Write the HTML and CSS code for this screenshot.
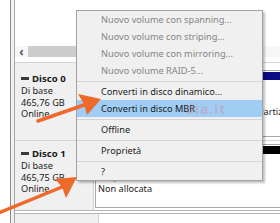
FILE: index.html
```html
<!DOCTYPE html>
<html lang="it">
<head>
<meta charset="utf-8">
<link rel="stylesheet" href="styles.css">
</head>
<body>
<div class="screen">
  <div class="gutter"></div>
  <div class="edge"></div>
  <div class="main">
    <div class="top-area"></div>
    <div class="hscroll">
      <span class="scroll-arrow">&#8249;</span>
      <div class="thumb"></div>
    </div>
    <div class="disk-row d0">
      <div class="disk-label">
        <div class="disk-title"><span class="disk-icon"></span>Disco 0</div>
        <div>Di base</div>
        <div>465,76 GB</div>
        <div>Online</div>
      </div>
      <div class="part-area">
        <div class="part">
          <div class="part-head navy"></div>
          <div class="part-body">
            <div>465,76 GB NTFS</div>
            <div class="status">Integro (Avvio, File di paging, Dump di arresto, Partizione primaria)</div>
          </div>
        </div>
      </div>
    </div>
    <div class="disk-row d1">
      <div class="disk-label">
        <div class="disk-title"><span class="disk-icon"></span>Disco 1</div>
        <div>Di base</div>
        <div>465,75 GB</div>
        <div>Online</div>
      </div>
      <div class="part-area">
        <div class="part">
          <div class="part-head black"></div>
          <div class="part-body unalloc">
            <div>465,75 GB</div>
            <div>Non allocata</div>
          </div>
        </div>
      </div>
    </div>
    <div class="disk-row cd">
      <div class="disk-label">
        <div class="disk-title"><span class="cd-icon"></span>CD-ROM 0</div>
      </div>
    </div>
  </div>

  <div class="menu">
    <div class="item dis">Nuovo volume con spanning...</div>
    <div class="item dis">Nuovo volume con striping...</div>
    <div class="item dis">Nuovo volume con mirroring...</div>
    <div class="item dis">Nuovo volume RAID-5...</div>
    <div class="sep"></div>
    <div class="item">Converti in disco dinamico...</div>
    <div class="item hl">Converti in disco MBR</div>
    <div class="sep"></div>
    <div class="item">Offline</div>
    <div class="sep"></div>
    <div class="item">Proprietà</div>
    <div class="sep"></div>
    <div class="item">?</div>
    <span class="wm">dia.it</span>
  </div>

  <svg class="arrows" width="280" height="223" viewBox="0 0 280 223">
    <line x1="38" y1="121" x2="84" y2="105" stroke="#ee6a2a" stroke-width="3.5" stroke-linecap="round"/>
    <path d="M101 99 L78 94 L84 104 L87 115 Z" fill="#ee6a2a"/>
    <line x1="-4" y1="214" x2="62" y2="187" stroke="#ee6a2a" stroke-width="3.5" stroke-linecap="round"/>
    <path d="M77 177 L55 179 L62 187 L66 198 Z" fill="#ee6a2a"/>
  </svg>
</div>
</body>
</html>
```

FILE: styles.css
```css
html, body {
  margin: 0;
  padding: 0;
  background: #ffffff;
}
body {
  width: 280px;
  height: 223px;
  overflow: hidden;
  font-family: "Noto Sans", "Open Sans", sans-serif;
  font-size: 9.2px;
  color: #1b1b1b;
}
.screen {
  position: relative;
  display: flex;
  width: 280px;
  height: 223px;
  overflow: hidden;
}
.gutter {
  width: 10px;
  flex: none;
  background: #ffffff;
}
.edge {
  width: 3px;
  flex: none;
  border-left: 1px solid #8c8c8c;
  border-right: 1px solid #a8a8a8;
  background: #f2f2f2;
}
.main {
  flex: 1;
  min-width: 0;
  display: flex;
  flex-direction: column;
  background: #ffffff;
}
.top-area {
  height: 46px;
  flex: none;
}
.hscroll {
  height: 11px;
  flex: none;
  display: flex;
  align-items: center;
  background: #f7f7f7;
}
.scroll-arrow {
  width: 13px;
  text-align: center;
  font-size: 12px;
  font-weight: bold;
  line-height: 11px;
  color: #555;
}
.thumb {
  width: 120px;
  height: 11px;
  background: #cdcdcd;
}
.disk-row {
  display: flex;
  flex: none;
  background: #ffffff;
}
.d0 {
  margin-top: 5px;
  height: 77px;
  border-top: 1px solid #d4d4d4;
}
.d1 {
  height: 69px;
  border-top: 1px solid #d4d4d4;
  border-bottom: 1px solid #b4b4b4;
}
.cd {
  margin-top: 2px;
  border-top: 1px solid #b4b4b4;
  height: 20px;
}
.disk-label {
  width: 72px;
  flex: none;
  padding: 10px 0 0 6px;
  background: #f0f0f0;
  border-right: 1px solid #d0d0d0;
  line-height: 11.3px;
  color: #1b1b1b;
}
.d1 .disk-label {
  padding-top: 7px;
}
.cd .disk-label {
  padding-top: 7px;
  padding-left: 11px;
}
.disk-title {
  font-weight: bold;
  font-size: 9.6px;
  display: flex;
  align-items: center;
  margin-bottom: 1px;
}
.disk-icon {
  width: 8px;
  height: 3px;
  background: #3a3a3a;
  margin-right: 3px;
}
.cd-icon {
  width: 7px;
  height: 7px;
  border-radius: 50%;
  background: #a9a9a9;
  margin-right: 3px;
}
.part-area {
  flex: 1;
  min-width: 0;
  padding: 7px 0 3px 1px;
  display: flex;
}
.d1 .part-area {
  padding-top: 3px;
  padding-bottom: 2px;
}
.part {
  flex: 1;
  min-width: 0;
  display: flex;
  flex-direction: column;
  border: 1px solid #a8a8a8;
  border-right: none;
  background: #ffffff;
  overflow: hidden;
}
.part-head {
  height: 8px;
  margin: 1px 0 0 1px;
  flex: none;
}
.navy { background: #0c0c84; }
.black { background: #000000; }
.part-body {
  flex: 1;
  padding: 15px 0 0 2px;
  line-height: 11px;
  white-space: nowrap;
  overflow: hidden;
}
.status {
  margin-left: -43px;
}
.unalloc {
  padding-top: 18px;
}
.menu {
  position: absolute;
  left: 76px;
  top: 10px;
  width: 185px;
  background: #f0f0f0;
  border: 1px solid #a3a3a3;
  box-shadow: 2px 2px 2px rgba(0, 0, 0, 0.25);
  font-size: 9.2px;
}
.item {
  height: 17px;
  line-height: 17px;
  padding-left: 24px;
  white-space: nowrap;
  color: #1b1b1b;
}
.item.dis {
  color: #858585;
}
.item.hl {
  background: #9fcdf3;
}
.sep {
  height: 4px;
  display: flex;
  align-items: center;
}
.sep::before {
  content: "";
  display: block;
  width: 100%;
  height: 1px;
  background: #d5d5d5;
}
.wm {
  position: absolute;
  left: 108px;
  top: 90px;
  line-height: 16px;
  color: rgba(232, 110, 120, 0.28);
  font-weight: bold;
  font-size: 14px;
  letter-spacing: 1px;
}
.arrows {
  position: absolute;
  left: 0;
  top: 0;
}
```
